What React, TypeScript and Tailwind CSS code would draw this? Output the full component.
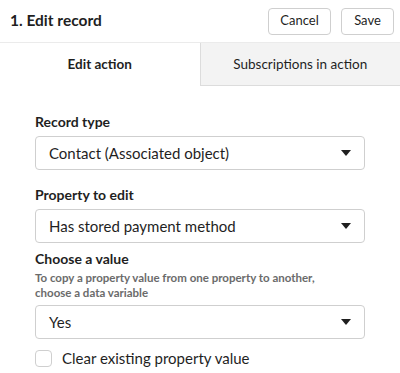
import { useState } from 'react'

const FONT = { fontFamily: 'Lato, "Liberation Sans", sans-serif' }

function Caret() {
  return (
    <svg width="10" height="6" viewBox="0 0 10 6" className="shrink-0">
      <path d="M0 0 H10 L5 6 Z" fill="#1f1f1f" />
    </svg>
  )
}

function SelectBox({ value }: { value: string }) {
  return (
    <div className="flex h-[34px] w-full items-center justify-between rounded-[4px] border border-[#cfcfcf] bg-white pl-[13px] pr-[13px]">
      <span className="text-[15px] leading-[20px] text-[#1f1f1f]">{value}</span>
      <Caret />
    </div>
  )
}

function Label({ children, className = '' }: { children: string; className?: string }) {
  return (
    <div className={`text-[14px] font-bold leading-[20px] text-[#1f1f1f] ${className}`}>{children}</div>
  )
}

export default function App() {
  const [tab, setTab] = useState(0)
  const [clear, setClear] = useState(false)

  return (
    <div className="h-[373px] w-[400px] overflow-hidden bg-white" style={FONT}>
      {/* header */}
      <div className="flex h-[43px] items-center justify-between border-b border-[#ebebeb] pl-[10px] pr-[6px]">
        <h1 className="text-[15.5px] font-bold text-[#1f1f1f]">1. Edit record</h1>
        <div className="flex gap-[10px]">
          <button className="h-[27px] w-[63px] rounded-[4px] border border-[#cfcfcf] bg-white text-[13px] text-[#1f1f1f]">
            Cancel
          </button>
          <button className="h-[27px] w-[53px] rounded-[4px] border border-[#cfcfcf] bg-white text-[13px] text-[#1f1f1f]">
            Save
          </button>
        </div>
      </div>

      {/* tabs */}
      <div className="flex h-[43px]">
        <button
          onClick={() => setTab(0)}
          className={`flex-1 text-[13.5px] text-[#1f1f1f] ${
            tab === 0 ? 'bg-white font-bold' : 'border-b border-[#dcdcdc] bg-[#f3f3f3]'
          }`}
        >
          Edit action
        </button>
        <button
          onClick={() => setTab(1)}
          className={`flex-1 text-[13.5px] text-[#1f1f1f] ${
            tab === 1 ? 'bg-white font-bold' : 'border-b border-l border-[#dcdcdc] bg-[#f3f3f3]'
          }`}
        >
          Subscriptions in action
        </button>
      </div>

      {/* form */}
      <div className="flex flex-col px-[35px] pt-[26px]">
        <Label className="mb-[4px]">Record type</Label>
        <SelectBox value="Contact (Associated object)" />

        <Label className="mb-[4px] mt-[15px]">Property to edit</Label>
        <SelectBox value="Has stored payment method" />

        <Label className="mb-[1px] mt-[6px]">Choose a value</Label>
        <p className="mb-[5px] text-[11.5px] font-bold leading-[15px] text-[#6b6b6b]">
          To copy a property value from one property to another,
          <br />
          choose a data variable
        </p>
        <SelectBox value="Yes" />

        <label className="mt-[9px] flex items-center gap-[10px]">
          <input
            type="checkbox"
            checked={clear}
            onChange={() => setClear(!clear)}
            className="h-[17px] w-[17px] appearance-none rounded-[4px] border border-[#cfcfcf] bg-white"
          />
          <span className="text-[15px] leading-[20px] text-[#1f1f1f]">Clear existing property value</span>
        </label>
      </div>
    </div>
  )
}
